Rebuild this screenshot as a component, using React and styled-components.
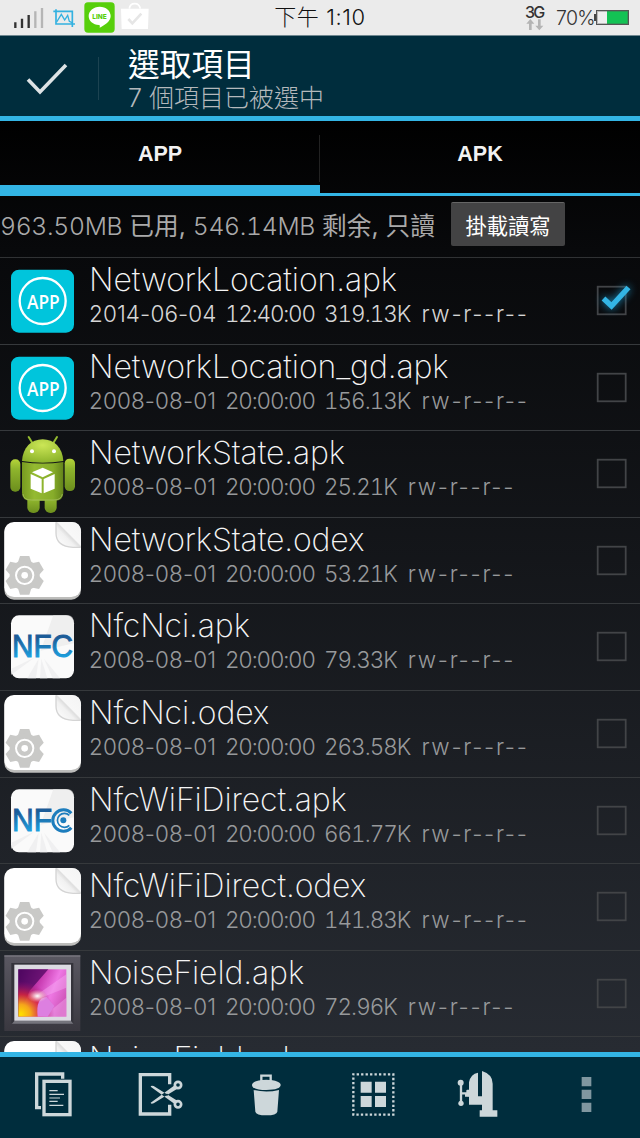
import React from 'react'
import styled, { createGlobalStyle } from 'styled-components';

const files = [
    { name: 'NetworkLocation.apk', date: '2014-06-04', time: '12:40:00', size: '319.13K', icon: 'app', checked: true },
    { name: 'NetworkLocation_gd.apk', date: '2008-08-01', time: '20:00:00', size: '156.13K', icon: 'app' },
    { name: 'NetworkState.apk', date: '2008-08-01', time: '20:00:00', size: '25.21K', icon: 'android' },
    { name: 'NetworkState.odex', date: '2008-08-01', time: '20:00:00', size: '53.21K', icon: 'page' },
    { name: 'NfcNci.apk', date: '2008-08-01', time: '20:00:00', size: '79.33K', icon: 'nfc' },
    { name: 'NfcNci.odex', date: '2008-08-01', time: '20:00:00', size: '263.58K', icon: 'page' },
    { name: 'NfcWiFiDirect.apk', date: '2008-08-01', time: '20:00:00', size: '661.77K', icon: 'nfcWave' },
    { name: 'NfcWiFiDirect.odex', date: '2008-08-01', time: '20:00:00', size: '141.83K', icon: 'page' },
    { name: 'NoiseField.apk', date: '2008-08-01', time: '20:00:00', size: '72.96K', icon: 'frame' },
    { name: 'NoiseField.odex', icon: 'page' },
]

// ---------- file icons, all on a 270 x 258 grid ----------

function AppIcon() {
    return (
        <>
            <rect x="33" y="35" width="189" height="189" rx="24" fill="#00c5dc" />
            <circle cx="128" cy="129" r="69" fill="none" stroke="#fff" strokeWidth="7" />
            <text x="81" y="152" textLength="98" fontFamily="Open Sans, sans-serif" fontWeight="600" fontSize="57" lengthAdjust="spacingAndGlyphs" fill="#fff">APP</text>
        </>
    )
}

function AndroidIcon() {
    return (
        <g transform="translate(0 -1)">
            <defs>
                <linearGradient id="limb" x1="0" x2="0" y1="0" y2="1">
                    <stop offset="0" stopColor="#b5d43a" />
                    <stop offset="0.3" stopColor="#8fb52d" />
                    <stop offset="1" stopColor="#6c8e1d" />
                </linearGradient>
                <radialGradient id="head" cx="0.5" cy="0.25" r="0.75">
                    <stop offset="0" stopColor="#cbe656" />
                    <stop offset="1" stopColor="#8db42b" />
                </radialGradient>
                <linearGradient id="torso" x1="0" x2="1" y1="0" y2="0">
                    <stop offset="0" stopColor="#779b20" />
                    <stop offset="0.3" stopColor="#94ba31" />
                    <stop offset="0.75" stopColor="#87ad2a" />
                    <stop offset="1" stopColor="#63841a" />
                </linearGradient>
            </defs>
            <path d="M86 19l13 21M171 19l-13 21" stroke="#94bb30" strokeWidth="6" strokeLinecap="round" />
            <rect x="82" y="190" width="37" height="57" rx="17" fill="url(#limb)" />
            <rect x="134" y="190" width="36" height="57" rx="17" fill="url(#limb)" />
            <rect x="31" y="86" width="30" height="97" rx="14" fill="url(#limb)" />
            <rect x="194" y="84" width="31" height="97" rx="14" fill="url(#limb)" />
            <path d="M66 91c2-40 28-65 62-65s60 25 62 65q-62 10-124 0z" fill="url(#head)" />
            <circle cx="96" cy="62" r="6" fill="#fff" />
            <circle cx="162" cy="62" r="6" fill="#fff" />
            <path d="M66 94q62 9 124 0v92q0 24-26 24H92q-26 0-26-24z" fill="url(#torso)" />
            <path d="M69 190q2 18 25 18h68q22 0 25-18" fill="none" stroke="#afc66c" strokeWidth="2" />
            <path d="M128 111l31 14-31 15-32-15z" fill="#fff" />
            <path d="M92 130l33 15v43l-33-14zM164 130l-33 15v43l33-14z" fill="#fff" />
        </g>
    )
}

const teeth = [0, 60, 120, 180, 240, 300]

function PageIcon() {
    return (
        <>
            <defs>
                <linearGradient id="curl" x1="0" x2="1" y1="1" y2="0">
                    <stop offset="0" stopColor="#fff" />
                    <stop offset="0.4" stopColor="#f1f1f1" />
                    <stop offset="0.5" stopColor="#dedede" />
                    <stop offset="0.54" stopColor="#f8f8f8" />
                    <stop offset="1" stopColor="#f4f4f4" />
                </linearGradient>
            </defs>
            <rect x="13" y="14" width="230" height="231" rx="29" fill="#bdbdbb" />
            <rect x="13" y="12" width="230" height="225" rx="29" fill="#fff" />
            <path d="M168 12h46q29 0 29 29v47h-24q-51 0-51-43z" fill="url(#curl)" />
            <path d="M168 13v32q0 40 51 43h23" fill="none" stroke="#d4d4d4" strokeWidth="4" />
            <g transform="translate(74 172)" fill="#c9c9c7">
                {teeth.map((a) => (
                    <path key={a} transform={`rotate(${a})`} d="M-21-36l7-22h28l7 22z" />
                ))}
                <circle r="45" />
                <circle r="26" fill="none" stroke="#fff" strokeWidth="6" />
                <circle r="10" fill="#fff" />
            </g>
        </>
    )
}

function NfcIcon({ wave }) {
    return (
        <>
            <defs>
                <linearGradient id="nfcText" x1="0" x2="0" y1="0" y2="1">
                    <stop offset="0.25" stopColor="#1c5c98" />
                    <stop offset="0.8" stopColor="#1da0df" />
                </linearGradient>
            </defs>
            <rect x="33" y="34" width="189" height="189" rx="24" fill="#fafafa" />
            <path d="M160 34h42q20 0 20 24v60L122 140z" fill="#e9e9ea" opacity="0.7" />
            <path d="M116 164L82 223h26zM124 164l-4 59h22zM132 164l26 59h22zM105 160l-71 34v18z" fill="#f0f0f1" />
            <g fontFamily="Liberation Sans, sans-serif" fontSize="93" fill="url(#nfcText)" stroke="url(#nfcText)" strokeWidth="3">
                {wave ? (
                    <text x="36" y="160" textLength="120" lengthAdjust="spacingAndGlyphs">NF</text>
                ) : (
                    <text x="36" y="160" textLength="183" lengthAdjust="spacingAndGlyphs">NFC</text>
                )}
            </g>
            {wave && (
                <g fill="none" stroke="#1d7dbd">
                    <path d="M214 106a32 32 0 1 0 0 43" strokeWidth="9" />
                    <path d="M208 112a21 21 0 1 0 0 30" strokeWidth="5" />
                    <circle cx="190" cy="127" r="9" fill="#1d7dbd" stroke="none" />
                </g>
            )}
        </>
    )
}

function FrameIcon() {
    return (
        <>
            <defs>
                <linearGradient id="wood" x1="0" x2="0" y1="0" y2="1">
                    <stop offset="0" stopColor="#5a5862" />
                    <stop offset="1" stopColor="#3a3840" />
                </linearGradient>
                <linearGradient id="art" x1="0" x2="1" y1="0.2" y2="0.6">
                    <stop offset="0" stopColor="#5c0b68" />
                    <stop offset="0.4" stopColor="#c73ab0" />
                    <stop offset="0.7" stopColor="#ee78e4" />
                    <stop offset="1" stopColor="#cf55b8" />
                </linearGradient>
                <radialGradient id="flame" cx="0.05" cy="0.95" r="0.7">
                    <stop offset="0" stopColor="#ffe000" />
                    <stop offset="0.3" stopColor="#f5a51b" />
                    <stop offset="0.6" stopColor="#d8263c" stopOpacity="0.85" />
                    <stop offset="1" stopColor="#a0107a" stopOpacity="0" />
                </radialGradient>
                <radialGradient id="glow" cx="0.5" cy="0.5" r="0.5">
                    <stop offset="0" stopColor="#fff" />
                    <stop offset="1" stopColor="#ffd0c0" stopOpacity="0" />
                </radialGradient>
            </defs>
            <rect x="13" y="13" width="228" height="227" fill="url(#wood)" />
            <path d="M13 15h228" stroke="#85838c" strokeWidth="3" />
            <path d="M34 36h186v180H34z" fill="#34333b" />
            <path d="M36 218h184l-9-10H45z" fill="#75747c" />
            <rect x="43" y="41" width="170" height="168" fill="#dcdbe2" />
            <rect x="55" y="55" width="144" height="142" fill="url(#art)" />
            <path d="M55 55h90l-56 64-34 78z" fill="#4d0760" opacity="0.75" />
            <path d="M199 70l-86 60-8 18 94-38zM199 140l-70 57h70z" fill="#f7b2f4" opacity="0.4" />
            <rect x="55" y="55" width="144" height="142" fill="url(#flame)" />
            <path d="M140 138q-34 2-27 59h30l20-32z" fill="#dd7fe0" />
            <ellipse cx="112" cy="135" rx="30" ry="19" fill="url(#glow)" />
        </>
    )
}

const icons = {
    app: <AppIcon />,
    android: <AndroidIcon />,
    page: <PageIcon />,
    nfc: <NfcIcon />,
    nfcWave: <NfcIcon wave />,
    frame: <FrameIcon />,
}

// ---------- toolbar icons, 320 x 243 grid each ----------

const tools = [
    <g key="copy" fill="none" stroke="#cdd7da" strokeWidth="10">
        <path d="M188 65V51H110v101h13" />
        <rect x="132" y="73" width="78" height="100" />
        <path d="M148 101h25M148 112h44M148 123h32M148 133h25M148 145h42" strokeWidth="3.5" />
    </g>,
    <g key="cut" fill="none" stroke="#cdd7da" strokeWidth="10">
        <path d="M188 82V53H100v118h88v-28" />
        <path d="M131 89q1-5 9-2l71 44-7 11zM131 137q1 5 9 2l71-44-7-11z" fill="#cdd7da" stroke="none" />
        <circle cx="213" cy="84" r="9.5" strokeWidth="8" />
        <circle cx="213" cy="142" r="9.5" strokeWidth="8" />
        <circle cx="180" cy="113" r="3" fill="#002d3d" stroke="none" />
    </g>,
    <g key="trash" fill="#cdd7da">
        <path d="M145 72V56h28v16" fill="none" stroke="#cdd7da" strokeWidth="7" />
        <path d="M117 84q0-14 43-16 43 2 43 16t-43 15q-43-1-43-15z" />
        <path d="M122 99q38 9 76 0l-5 65q-2 11-33 11t-33-11z" />
    </g>,
    <g key="select" fill="#cdd7da">
        <rect x="100" y="52" width="120" height="121" fill="none" stroke="#cdd7da" strokeWidth="7" strokeDasharray="7 6.4" strokeDashoffset="3.5" />
        <path d="M122 74h33v33h-33zM165 74h33v33h-33zM122 117h33v33h-33zM165 117h33v33h-33z" />
    </g>,
    <g key="clamp" fill="#cdd7da">
        <path d="M153 47v71h12V42q32 10 32 38v80h14v19h-53v-19h7v-17h-39v-24h-12v-10h12V76q5-26 27-29z" />
        <path d="M102 77v62M102 109h20" stroke="#cdd7da" strokeWidth="7" />
        <circle cx="101" cy="77" r="9" />
        <circle cx="102" cy="139" r="8" />
        <rect x="118" y="98" width="12" height="20" rx="3" />
    </g>,
    <path key="more" d="M146 60h29v28h-29zM146 98h29v28h-29zM146 137h29v28h-29z" fill="#8097a0" />,
]

function FileRow({ file }) {
    return (
        <Row>
            <FileIcon viewBox="0 0 270 258">{icons[file.icon]}</FileIcon>
            <FileText>
                <FileName>{file.name}</FileName>
                {file.date && (
                    <Meta $bright={file.checked}>
                        <DateText>{file.date}</DateText>
                        <TimeText>{file.time}</TimeText>
                        <SizeText>{file.size}</SizeText>
                        <Perms>rw-r--r--</Perms>
                    </Meta>
                )}
            </FileText>
            <CheckBox viewBox="0 0 40 40">
                <rect x="4.7" y="5.7" width="28" height="27.6" fill="none" stroke="#424447" strokeWidth="1.8" />
                {file.checked && (
                    <path className="tick" d="M10.5 17.5l8 7.5L35.5 6.5" fill="none" stroke="#33b5e5" strokeWidth="5.4" />
                )}
            </CheckBox>
        </Row>
    )
}

function App() {
    return (
        <Screen>
            <GlobalStyle />
            <StatusBar>
                <StatusIcons viewBox="0 0 450 105">
                    <path d="M46 67v17M66 56v28M86 45v39" stroke="#333" strokeWidth="7" />
                    <path d="M106 34v50M126 24v60" stroke="#b5b5b5" strokeWidth="7" />
                    <path d="M160 34h57v47M168 28v44h57" fill="none" stroke="#33b1e0" strokeWidth="5" />
                    <path d="M170 66l14-23 10 17 9-14 5 18 8 4" fill="none" stroke="#33b1e0" strokeWidth="4" />
                    <rect x="253" y="7" width="91" height="91" rx="11" fill="#57cf0b" />
                    <path d="M299 20c19 0 33 12 33 28 0 17-18 27-33 35 1-5 1-8-2-8-18-1-31-12-31-27s14-28 33-28z" fill="#fff" />
                    <text x="277" y="56" textLength="43" lengthAdjust="spacingAndGlyphs" fontFamily="Inter, sans-serif" fontWeight="800" fontSize="20" fill="#57cf0b">LINE</text>
                    <path d="M388 26q2-15 16-15t17 15" fill="none" stroke="#fff" strokeWidth="5" />
                    <path d="M363 26h83l-2 61h-79z" fill="#fff" />
                    <path d="M385 57l12 13 27-29" fill="none" stroke="#e6e6e6" strokeWidth="8" />
                </StatusIcons>
                <Clock>下午 1:10</Clock>
                <StatusRight>
                    <Network>
                        3G
                        <svg width="20" height="12" viewBox="0 0 60 36" fill="#b4b4b4">
                            <path d="M16 0l12 14h-8v19h-8V14H4zM43 34L31 20h8V1h8v19h8z" />
                        </svg>
                    </Network>
                    <Percent>70%</Percent>
                    <BatteryTip />
                    <Battery />
                </StatusRight>
            </StatusBar>

            <Header>
                <Done viewBox="0 0 100 80">
                    <path d="M28 43.5l12 12.5 26-27" fill="none" stroke="#dde3e5" strokeWidth="3.6" />
                </Done>
                <Titles>
                    <Title>選取項目</Title>
                    <SubTitle>7 個項目已被選中</SubTitle>
                </Titles>
            </Header>

            <Tabs>
                <Tab $active>APP</Tab>
                <Tab>APK</Tab>
            </Tabs>

            <Storage>
                <StorageText>
                    <Amount>963.50MB</Amount> 已用, <Amount>546.14MB</Amount> 剩余, 只讀
                </StorageText>
                <MountButton>掛載讀寫</MountButton>
            </Storage>

            <List>
                {files.map((file) => (
                    <FileRow key={file.name} file={file} />
                ))}
            </List>

            <Toolbar>
                {tools.map((tool) => (
                    <Tool key={tool.key}>
                        <svg viewBox="0 0 320 243">{tool}</svg>
                    </Tool>
                ))}
            </Toolbar>
        </Screen>
    )
}

export default App

const GlobalStyle = createGlobalStyle`
    body {
        margin: 0;
        background: #000;
    }

    * {
        box-sizing: border-box;
    }
`

const Screen = styled.div`
    width: 640px;
    height: 1138px;
    display: flex;
    flex-direction: column;
    overflow: hidden;
    font-family: Inter, "Noto Sans CJK TC", sans-serif;
    font-weight: 300;
    white-space: nowrap;
    background: linear-gradient(to bottom, #000 120px, #08090b 250px, #272b32 1050px);
`

const StatusBar = styled.div`
    height: 36px;
    flex: none;
    display: grid;
    grid-template-columns: 200px 240px 200px;
    background: #ebebeb;
    border-bottom: 1px solid #6f8790;
    color: #111;
`

const StatusIcons = styled.svg`
    width: 150px;
    height: 35px;
`

const Clock = styled.div`
    text-align: center;
    font-size: 22px;
    line-height: 35px;
    letter-spacing: 0.6px;
`

const StatusRight = styled.div`
    display: flex;
    padding-right: 11px;
    justify-content: flex-end;
`

const Network = styled.div`
    width: 20px;
    margin-right: 11px;
    padding-top: 6px;
    display: flex;
    flex-direction: column;
    font-size: 16px;
    font-weight: 500;
    line-height: 13px;
    letter-spacing: -1.8px;
    color: #333;
`

const Percent = styled.div`
    width: 38px;
    font-size: 19.5px;
    line-height: 37px;
    letter-spacing: -0.7px;
    color: #333;
`

const BatteryTip = styled.div`
    width: 2px;
    height: 7px;
    margin-top: 14px;
    background: #444;
`

const Battery = styled.div`
    width: 33px;
    height: 15px;
    margin-top: 10px;
    border: 1px solid #555;
    background: linear-gradient(to right, #eee 10px, #13c254 10px);
    box-shadow: inset 0 0 0 1px rgba(90, 90, 90, 0.35);
`

const Header = styled.div`
    height: 85px;
    flex: none;
    display: flex;
    background: #002d3d;
    border-bottom: 5px solid #33b5e5;
`

const Done = styled.svg`
    width: 100px;
    height: 80px;
    background: linear-gradient(#1c4351, #1c4351) no-repeat 98px 21px / 1px 43px;
`

const Titles = styled.div`
    padding: 10px 0 0 28px;
`

const Title = styled.div`
    font-size: 31.7px;
    font-weight: 400;
    line-height: 38px;
    color: #fff;
`

const SubTitle = styled.div`
    font-size: 25px;
    line-height: 28px;
    color: #b4b9bc;
`

const Tabs = styled.div`
    height: 75px;
    flex: none;
    display: flex;
`

const Tab = styled.div`
    flex: 1;
    display: flex;
    justify-content: center;
    padding-top: 19px;
    font-family: "Liberation Sans", sans-serif;
    font-size: 21.5px;
    font-weight: 700;
    line-height: 29px;
    color: #f2f2f2;
    border-bottom: ${(props) => (props.$active ? '11px' : '3px')} solid #33b5e5;
    background: ${(props) => (props.$active
        ? 'linear-gradient(#222, #222) no-repeat right 14px / 1px 47px'
        : 'none')};
`

const Storage = styled.div`
    height: 62px;
    flex: none;
    display: flex;
    padding-top: 6px;
    border-bottom: 1px solid #303234;
`

const StorageText = styled.div`
    width: 451px;
    font-size: 24.7px;
    font-weight: 400;
    line-height: 48px;
    color: #aaa;
`

const Amount = styled.span`
    font-weight: 300;
    letter-spacing: -0.3px;
    font-variant-numeric: tabular-nums;
`

const MountButton = styled.button`
    width: 114px;
    height: 44px;
    padding: 0;
    border: 0;
    border-top: 1px solid #666;
    border-radius: 2px;
    font-family: "Noto Sans CJK TC", sans-serif;
    font-size: 21.2px;
    font-weight: 400;
    color: #fff;
    background: #434344;
`

const List = styled.div`
    flex: 1;
    min-height: 0;
    overflow: hidden;
`

const Row = styled.div`
    height: 86.6px;
    display: flex;
    border-bottom: 1px solid #36393c;
`

const FileIcon = styled.svg`
    width: 90px;
    height: 86px;
    flex: none;
`

const FileText = styled.div`
    width: 501px;
    padding-top: 2px;
    margin-left: -1px;
`

const FileName = styled.div`
    font-size: 32px;
    font-weight: 250;
    line-height: 40px;
    letter-spacing: -0.12px;
    color: #f5f5f5;
`

const Meta = styled.div`
    display: flex;
    font-size: 22.5px;
    line-height: 27px;
    color: ${(props) => (props.$bright ? '#d6d6d6' : '#97999b')};
`

const DateText = styled.span`
    width: 136px;
    letter-spacing: 0.1px;
`

const TimeText = styled.span`
    width: 99px;
    letter-spacing: -1.2px;
    font-variant-numeric: tabular-nums;
`

const SizeText = styled.span`
    margin-right: 11px;
    letter-spacing: -1px;
    font-variant-numeric: tabular-nums;
`

const Perms = styled.span`
    letter-spacing: 1.7px;
`

const CheckBox = styled.svg`
    width: 40px;
    height: 40px;
    margin: 23px 0 0 3px;
    overflow: visible;

    .tick {
        filter: drop-shadow(0 0 4px #1b8fc0);
    }
`

const Toolbar = styled.div`
    height: 86px;
    flex: none;
    display: flex;
    background: #002d3d;
    border-top: 5px solid #33b5e5;
`

const Tool = styled.div`
    flex: 1;

    svg {
        display: block;
        width: 100%;
        height: 81px;
    }
`
